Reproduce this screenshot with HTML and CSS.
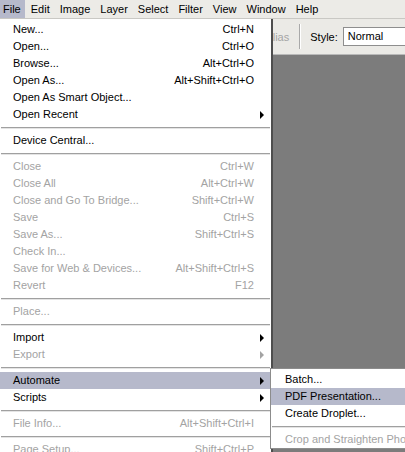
FILE: index.html
```html
<!DOCTYPE html>
<html>
<head>
  <title>File menu</title>
  <link rel="stylesheet" href="styles.css">
</head>
<body>
  <div class="menubar">
    <span class="top-item active">File</span>
    <span class="top-item">Edit</span>
    <span class="top-item">Image</span>
    <span class="top-item">Layer</span>
    <span class="top-item">Select</span>
    <span class="top-item">Filter</span>
    <span class="top-item">View</span>
    <span class="top-item">Window</span>
    <span class="top-item">Help</span>
  </div>

  <div class="options">
    <span class="opt-muted">Anti-alias</span>
    <span class="opt-sep"></span>
    <span class="opt-label">Style:</span>
    <span class="opt-select">Normal</span>
  </div>

  <div class="workspace"></div>

  <!-- File menu -->
  <div class="menu">
    <div class="item"><span>New...</span><span class="key">Ctrl+N</span></div>
    <div class="item"><span>Open...</span><span class="key">Ctrl+O</span></div>
    <div class="item"><span>Browse...</span><span class="key">Alt+Ctrl+O</span></div>
    <div class="item"><span>Open As...</span><span class="key">Alt+Shift+Ctrl+O</span></div>
    <div class="item"><span>Open As Smart Object...</span><span class="key"></span></div>
    <div class="item sub"><span>Open Recent</span><span class="key"></span></div>
    <div class="sep"></div>
    <div class="item"><span>Device Central...</span><span class="key"></span></div>
    <div class="sep"></div>
    <div class="item off"><span>Close</span><span class="key">Ctrl+W</span></div>
    <div class="item off"><span>Close All</span><span class="key">Alt+Ctrl+W</span></div>
    <div class="item off"><span>Close and Go To Bridge...</span><span class="key">Shift+Ctrl+W</span></div>
    <div class="item off"><span>Save</span><span class="key">Ctrl+S</span></div>
    <div class="item off"><span>Save As...</span><span class="key">Shift+Ctrl+S</span></div>
    <div class="item off"><span>Check In...</span><span class="key"></span></div>
    <div class="item off"><span>Save for Web &amp; Devices...</span><span class="key">Alt+Shift+Ctrl+S</span></div>
    <div class="item off"><span>Revert</span><span class="key">F12</span></div>
    <div class="sep"></div>
    <div class="item off"><span>Place...</span><span class="key"></span></div>
    <div class="sep"></div>
    <div class="item sub"><span>Import</span><span class="key"></span></div>
    <div class="item off sub"><span>Export</span><span class="key"></span></div>
    <div class="sep"></div>
    <div class="item sub hover"><span>Automate</span><span class="key"></span></div>
    <div class="item sub"><span>Scripts</span><span class="key"></span></div>
    <div class="sep"></div>
    <div class="item off"><span>File Info...</span><span class="key">Alt+Shift+Ctrl+I</span></div>
    <div class="sep"></div>
    <div class="item off"><span>Page Setup...</span><span class="key">Shift+Ctrl+P</span></div>
  </div>

  <!-- Automate submenu -->
  <div class="submenu">
    <div class="item"><span>Batch...</span></div>
    <div class="item hover"><span>PDF Presentation...</span></div>
    <div class="item"><span>Create Droplet...</span></div>
    <div class="sep"></div>
    <div class="item off"><span>Crop and Straighten Photos</span></div>
  </div>
</body>
</html>
```

FILE: styles.css
```css
body {
  margin: 0;
  width: 405px;
  height: 452px;
  overflow: hidden;
  font-family: "Liberation Sans", Arial, sans-serif;
  font-size: 11px;
  color: #000;
  background-color: #7c7c7c;
  display: flex;
  flex-direction: column;
  position: relative;
}
.menubar {
  height: 18px;
  display: flex;
  background-color: #ecebe7;
  border-bottom: 1px solid #c9c8c4;
}
.top-item {
  line-height: 18px;
  padding: 0 4px 0 3px;
  margin-right: 3px;
}
.top-item.active {
  background-color: #b6b9cb;
}
.options {
  height: 35px;
  display: flex;
  align-items: center;
  padding-left: 244px;
  background-color: #ebeae6;
  border-bottom: 1px solid #b9b9b9;
}
.opt-muted {
  color: #a5a5a5;
}
.opt-sep {
  width: 1px;
  height: 25px;
  background-color: #a9a9a9;
  border-right: 1px solid #fff;
  margin: 0 9px 0 10px;
}
.opt-label {
  margin-right: 5px;
}
.opt-select {
  flex: 1;
  height: 17px;
  line-height: 17px;
  padding-left: 4px;
  background-color: #fff;
  border: 1px solid #8e8e8e;
  border-right: none;
}
.workspace {
  flex: 1;
}
.menu {
  position: absolute;
  left: 0;
  top: 19px;
  width: 271px;
  padding-top: 2px;
  background-color: #fff;
  border-right: 2px solid #4e4e4e;
}
.item {
  height: 17px;
  line-height: 17px;
  display: flex;
  justify-content: space-between;
  padding: 0 17px 0 13px;
  position: relative;
  white-space: nowrap;
}
.item.off {
  color: #a3a3a3;
}
.item.hover {
  background-color: #b6b9cb;
}
.item.sub::after {
  content: "";
  position: absolute;
  right: 7px;
  top: 5px;
  border-left: 4px solid #000;
  border-top: 4px solid transparent;
  border-bottom: 4px solid transparent;
}
.item.off.sub::after {
  border-left-color: #a3a3a3;
}
.sep {
  height: 9px;
  display: flex;
  flex-direction: column;
  justify-content: center;
}
.sep::before {
  content: "";
  display: block;
  height: 1px;
  background-color: #a0a0a0;
  border-bottom: 1px solid #e4e4e4;
  margin: 0 1px;
}
.submenu {
  position: absolute;
  left: 270px;
  top: 368px;
  width: 150px;
  padding-top: 2px;
  background-color: #fff;
  border: 1px solid #8c8c8c;
}
.submenu .item {
  padding-left: 14px;
}
```
